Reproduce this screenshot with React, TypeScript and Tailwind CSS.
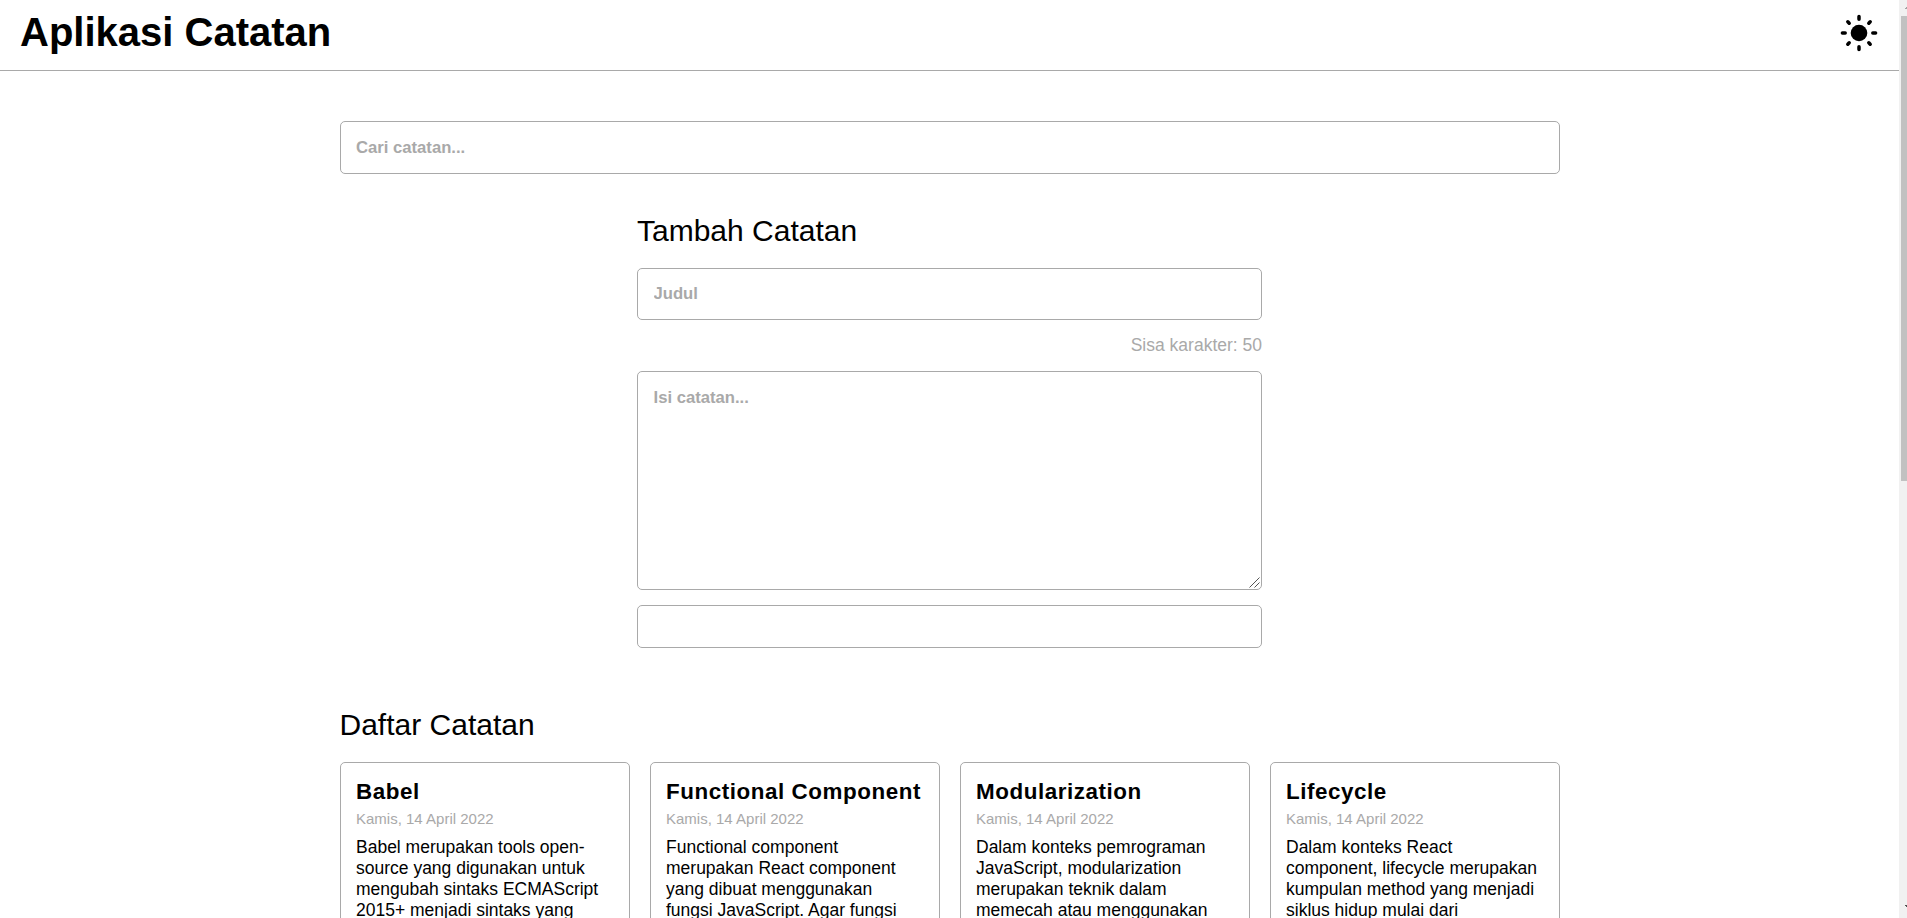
type Note = { title: string; date: string; body: string };

const notes: Note[] = [
  {
    title: "Babel",
    date: "Kamis, 14 April 2022",
    body: "Babel merupakan tools open-source yang digunakan untuk mengubah sintaks ECMAScript 2015+ menjadi sintaks yang",
  },
  {
    title: "Functional Component",
    date: "Kamis, 14 April 2022",
    body: "Functional component merupakan React component yang dibuat menggunakan fungsi JavaScript. Agar fungsi",
  },
  {
    title: "Modularization",
    date: "Kamis, 14 April 2022",
    body: "Dalam konteks pemrograman JavaScript, modularization merupakan teknik dalam memecah atau menggunakan",
  },
  {
    title: "Lifecycle",
    date: "Kamis, 14 April 2022",
    body: "Dalam konteks React component, lifecycle merupakan kumpulan method yang menjadi siklus hidup mulai dari",
  },
];

function SunIcon() {
  return (
    <svg className="size-10" viewBox="-20 -20 40 40" stroke="currentColor" strokeWidth="3.5" strokeLinecap="round">
      <circle r="8.3" fill="currentColor" stroke="none" />
      <path d="M0-16.6v2.8M0 16.6v-2.8M-16.6 0h2.8M16.6 0h-2.8" />
      <path d="M-11.2-11.2l1.4 1.4M11.2-11.2l-1.4 1.4M-11.2 11.2l1.4-1.4M11.2 11.2l-1.4-1.4" />
    </svg>
  );
}

function Header() {
  return (
    <header className="flex h-[71px] items-start justify-between border-b border-[#a9a9a9] px-5">
      <h1 className="mt-[9px] text-[40px] leading-[46px] font-bold">Aplikasi Catatan</h1>
      <button type="button" aria-label="Tema" className="mt-[13px]">
        <SunIcon />
      </button>
    </header>
  );
}

function NoteForm() {
  return (
    <form className="mx-auto mt-10 flex w-[625px] flex-col">
      <h2 className="text-[30px] leading-[34px]">Tambah Catatan</h2>
      <input
        placeholder="Judul"
        className="mt-5 h-[52px] rounded-[5px] border border-[#a9a9a9] px-[15.5px] text-[16.67px] font-bold placeholder:text-[#a9a9a9]"
      />
      <p className="mt-[15px] text-right text-[17.5px] leading-5 text-[#a9a9a9]">Sisa karakter: 50</p>
      <div className="relative mt-4">
        <textarea
          placeholder="Isi catatan..."
          className="block h-[219px] w-full resize-none rounded-[5px] border border-[#a9a9a9] px-[15.5px] pt-4 text-[16.67px] leading-[20px] font-bold placeholder:text-[#a9a9a9]"
        />
        <svg className="absolute right-[2px] bottom-[2px] size-[11px]" viewBox="0 0 11 11" stroke="#555" strokeWidth="1">
          <path d="M.5 10.5l10-10M5.5 10.5l5-5" />
        </svg>
      </div>
      <button type="submit" aria-label="Tambah" className="mt-[15px] h-[43px] rounded-[5px] border border-[#a9a9a9]" />
    </form>
  );
}

function NoteCard({ title, date, body }: Note) {
  return (
    <article className="h-[320px] rounded-[5px] border border-[#a9a9a9] px-[15.5px] pt-4">
      <h3 className="text-[22.4px] leading-[25px] font-bold tracking-[0.56px] whitespace-nowrap">{title}</h3>
      <p className="mt-1.5 text-[15px] leading-[17px] text-[#a9a9a9]">{date}</p>
      <p className="mt-2.5 text-[17.5px] leading-[21px]">{body}</p>
    </article>
  );
}

function Scrollbar() {
  return (
    <div className="flex w-2 shrink-0 flex-col bg-[#f1f1f1]">
      <svg className="h-4 w-2" viewBox="0 0 8 16" shapeRendering="crispEdges">
        <path d="M7 7h1v1H7zM6 8h2v1H6z" fill="#a3a3a3" />
      </svg>
      <div className="ml-0.5 h-[465px] bg-[#c1c1c1]" />
      <svg className="mt-auto h-4 w-2" viewBox="0 0 8 16" shapeRendering="crispEdges">
        <path d="M6 3h2v1H6zM7 4h1v1H7z" fill="#505050" />
      </svg>
    </div>
  );
}

export default function App() {
  return (
    <div className="flex h-[918px] overflow-hidden bg-white font-['Liberation_Sans',Arial,sans-serif] text-black">
      <div className="min-w-0 flex-1">
        <Header />
        <main className="mx-auto w-[1220px] pt-[50px]">
          <input
            placeholder="Cari catatan..."
            className="block h-[53px] w-full rounded-[5px] border border-[#a9a9a9] px-[15.5px] text-[16.67px] font-bold placeholder:text-[#a9a9a9]"
          />
          <NoteForm />
          <section className="mt-[60px]">
            <h2 className="text-[30px] leading-[34px]">Daftar Catatan</h2>
            <div className="mt-5 grid grid-cols-4 gap-5">
              {notes.map((note) => (
                <NoteCard key={note.title} {...note} />
              ))}
            </div>
          </section>
        </main>
      </div>
      <Scrollbar />
    </div>
  );
}
